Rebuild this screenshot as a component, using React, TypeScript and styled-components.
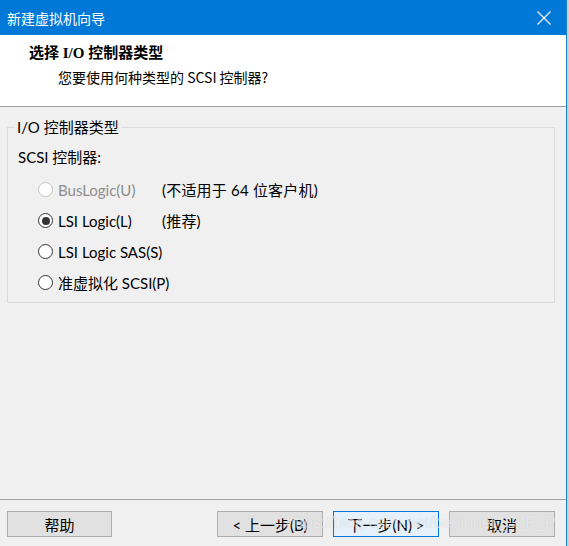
import React from "react";
import styled, { createGlobalStyle } from "styled-components";

const UI_FONT = `"Lato", "Noto Sans CJK SC", sans-serif`;

const Global = createGlobalStyle`
  html, body { margin: 0; padding: 0; }
  body { background: #cfcfcf; font-family: ${UI_FONT}; }
  #root { width: 569px; height: 546px; overflow: hidden; }
`;

const Page = styled.div`
  display: flex;
  width: 569px;
  height: 546px;
  background: #cfcfcf;
`;

const Window = styled.div`
  display: flex;
  flex-direction: column;
  width: 566px;
  height: 546px;
  border-right: 1px solid #1883d7;
  background: #f0f0f0;
`;

const TitleBar = styled.div`
  display: flex;
  align-items: center;
  height: 35px;
  flex: 0 0 35px;
  background: #0078d7;
  color: #ffffff;
`;

const TitleText = styled.div`
  flex: 1;
  padding-left: 7px;
  font-size: 14px;
  line-height: 20px;
  font-family: "Noto Sans CJK SC", sans-serif;
`;

const CloseButton = styled.div`
  display: flex;
  align-items: center;
  justify-content: center;
  width: 44px;
  height: 35px;
`;

const Header = styled.div`
  display: flex;
  flex-direction: column;
  height: 71px;
  flex: 0 0 71px;
  background: #ffffff;
  border-bottom: 1px solid #a0a0a0;
  padding-left: 29px;
`;

const HeaderTitle = styled.div`
  margin-top: 8px;
  font-family: "Liberation Serif", "Noto Sans CJK SC", serif;
  font-weight: 700;
  font-size: 15px;
  line-height: 20px;
  color: #000;
`;

const HeaderSub = styled.div`
  margin-top: 4px;
  padding-left: 29px;
  font-family: "Noto Sans CJK SC", sans-serif;
  font-size: 14px;
  line-height: 20px;
  color: #000;
`;

const Body = styled.div`
  flex: 1;
  padding: 12px 11px 0 7px;
`;

const Group = styled.fieldset`
  margin: 0;
  padding: 12px 10px 4px 10px;
  border: 1px solid #dcdcdc;
  min-width: 0;
`;

const Legend = styled.legend`
  margin-left: -3px;
  padding: 0 2px;
  font-size: 15px;
  line-height: 16px;
  color: #000;
`;

const FieldLabel = styled.div`
  font-size: 15px;
  line-height: 20px;
  color: #000;
`;

const OptionList = styled.div`
  display: flex;
  flex-direction: column;
  margin-top: 7px;
`;

const OptionRow = styled.div<{ $disabled?: boolean }>`
  display: flex;
  align-items: center;
  height: 31px;
  font-size: 15px;
  white-space: nowrap;
  color: ${(p) => (p.$disabled ? "#8d8d8d" : "#000")};
`;

const Radio = styled.span<{ $checked?: boolean; $disabled?: boolean }>`
  position: relative;
  box-sizing: border-box;
  width: 15px;
  height: 15px;
  margin-left: 20px;
  border-radius: 50%;
  border: 1px solid ${(p) => (p.$disabled ? "#c4c4c4" : "#333333")};
  background: #ffffff;
  flex: 0 0 15px;
  &::after {
    content: "";
    display: ${(p) => (p.$checked ? "block" : "none")};
    position: absolute;
    left: 2.5px;
    top: 2.5px;
    width: 8px;
    height: 8px;
    border-radius: 50%;
    background: #333333;
  }
`;

const OptionLabel = styled.span`
  min-width: 104px;
  margin-left: 5px;
  line-height: 20px;
`;

const OptionNote = styled.span`
  line-height: 20px;
  letter-spacing: 0.2px;
  color: #000;
`;

const Footer = styled.div`
  position: relative;
  display: flex;
  align-items: flex-start;
  flex: 0 0 47px;
  height: 47px;
  box-sizing: border-box;
  border-top: 1px solid #a0a0a0;
  padding: 11px 11px 0 7px;
`;

const Button = styled.div<{ $primary?: boolean; $w?: number }>`
  box-sizing: border-box;
  display: flex;
  align-items: center;
  justify-content: center;
  width: ${(p) => p.$w ?? 106}px;
  height: 26px;
  background: ${(p) => (p.$primary ? "#e5f1fb" : "#e1e1e1")};
  border: 1px solid ${(p) => (p.$primary ? "#0078d7" : "#adadad")};
  font-size: 15px;
  white-space: nowrap;
  color: #000;
`;

const Spacer = styled.div`
  flex: 1;
`;

const ButtonGroup = styled.div`
  display: flex;
  gap: 10px;
`;

const Watermark = styled.div`
  position: absolute;
  left: 286px;
  top: 13px;
  font-family: "Liberation Sans", Arial, sans-serif;
  font-size: 16px;
  line-height: 20px;
  color: rgba(255, 255, 255, 0.55);
  text-shadow: 0 0 1px rgba(140, 140, 140, 0.3);
  pointer-events: none;
  white-space: nowrap;
`;

const options = [
  { label: "BusLogic(U)", note: "(不适用于 64 位客户机)", disabled: true, checked: false },
  { label: "LSI Logic(L)", note: "(推荐)", disabled: false, checked: true },
  { label: "LSI Logic SAS(S)", note: "", disabled: false, checked: false },
  { label: "准虚拟化 SCSI(P)", note: "", disabled: false, checked: false },
];

export default function App() {
  return (
    <>
      <Global />
      <Page>
        <Window>
          <TitleBar>
            <TitleText>新建虚拟机向导</TitleText>
            <CloseButton>
              <svg width="14" height="14" viewBox="0 0 14 14">
                <path d="M0.5 0.5 L13.5 13.5 M13.5 0.5 L0.5 13.5" stroke="#ffffff" strokeWidth="1.1" fill="none" />
              </svg>
            </CloseButton>
          </TitleBar>
          <Header>
            <HeaderTitle>选择 I/O 控制器类型</HeaderTitle>
            <HeaderSub>您要使用何种类型的 SCSI 控制器?</HeaderSub>
          </Header>
          <Body>
            <Group>
              <Legend>I/O 控制器类型</Legend>
              <FieldLabel>SCSI 控制器:</FieldLabel>
              <OptionList>
                {options.map((o) => (
                  <OptionRow key={o.label} $disabled={o.disabled}>
                    <Radio $checked={o.checked} $disabled={o.disabled} />
                    <OptionLabel>{o.label}</OptionLabel>
                    {o.note && <OptionNote>{o.note}</OptionNote>}
                  </OptionRow>
                ))}
              </OptionList>
            </Group>
          </Body>
          <Footer>
            <Button $w={105}>帮助</Button>
            <Spacer />
            <ButtonGroup>
              <Button>&lt; 上一步(B)</Button>
              <Button $primary>下一步(N) &gt;</Button>
              <Button>取消</Button>
            </ButtonGroup>
            <Watermark>https://blog.csdn.net/beginner_C_P_P</Watermark>
          </Footer>
        </Window>
      </Page>
    </>
  );
}
